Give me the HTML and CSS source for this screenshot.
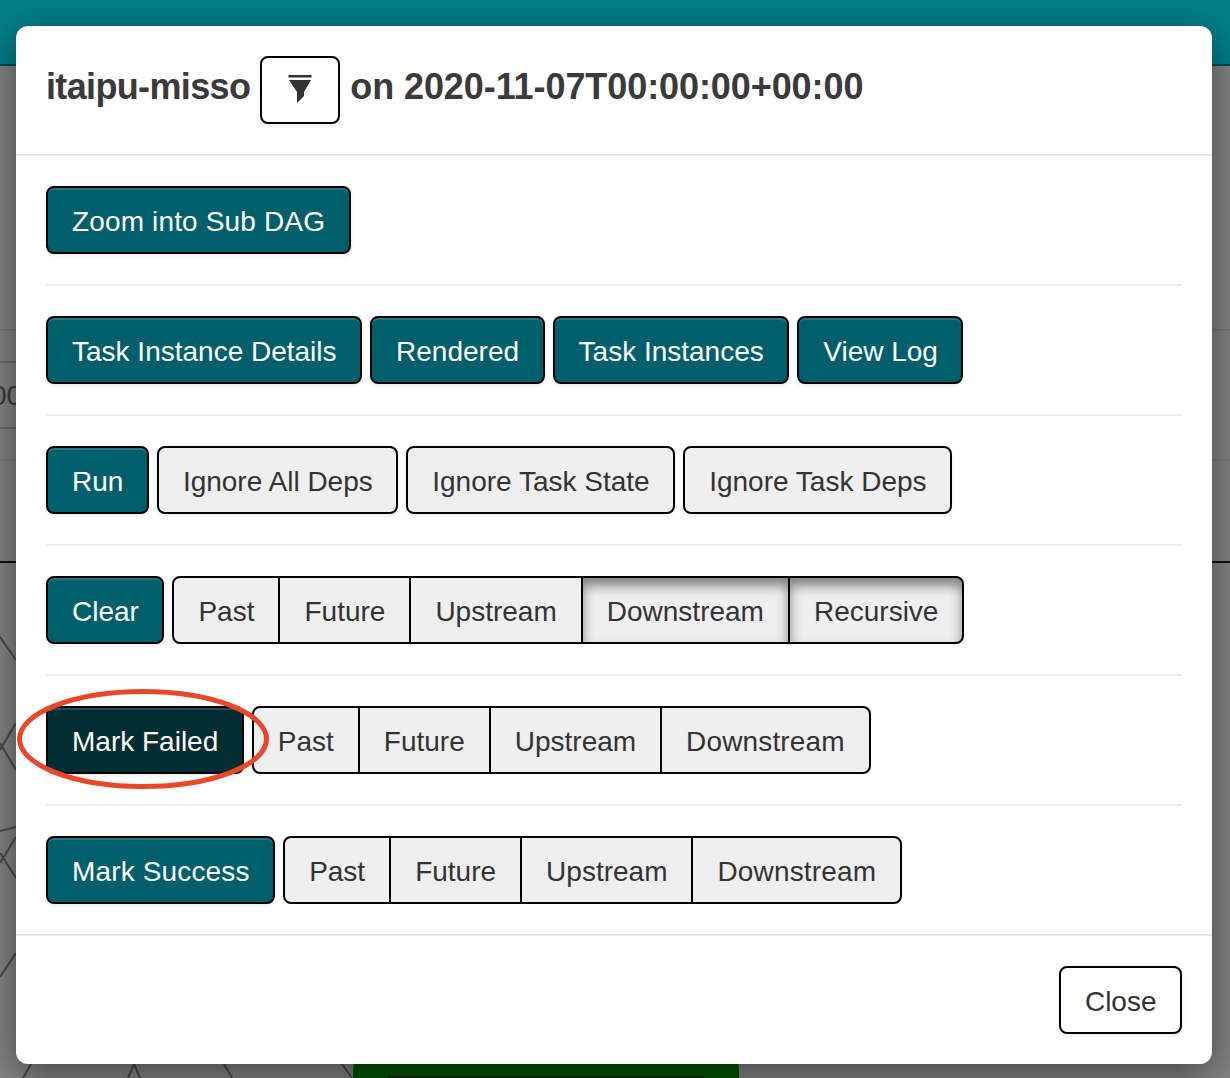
FILE: index.html
```html
<!DOCTYPE html>
<html lang="en">
<head>
    <meta charset="UTF-8">
    <meta name="viewport" content="width=device-width, initial-scale=1.0">
    <title>itaipu-misso</title>
    <link rel="stylesheet" href="styles.css">
</head>
<body>
    <!-- page behind the dialog -->
    <div class="page">
        <div class="navbar"></div>
        <div class="page-line line-a"></div>
        <div class="page-line page-line-short line-b"></div>
        <div class="page-line page-line-short line-c"></div>
        <div class="page-line line-d"></div>
        <div class="page-line line-e"></div>
        <div class="page-text">00</div>
        <svg class="graph-lines" width="1230" height="1078" viewBox="0 0 1230 1078">
            <path d="M0 637 L16 660 M16 723 L0 750 M0 743 L16 770 M0 831 L16 827 M16 837 L0 863 M0 853 L16 878 M16 953 L0 977 M31 1064 L23 1078 M134 1064 L128 1078 M134 1064 L140 1078 M224 1064 L232 1078 M342 1064 L352 1078" fill="none" stroke="#4a4a4a" stroke-width="2"/>
        </svg>
        <div class="graph-node"><div class="graph-node-inner"></div></div>
    </div>

    <div class="modal">
        <div class="modal-header">
            <span class="modal-title title-dag">itaipu-misso</span>
            <button class="btn btn-plain btn-filter">
                <svg width="24" height="30" viewBox="0 0 24 30">
                    <path d="M0.5 0H23.5V2.5H0.5Z" fill="#333"/>
                    <path d="M1 5H23L16 17V21L9 28V17Z" fill="#333"/>
                </svg>
            </button>
            <span class="modal-title title-date">on 2020-11-07T00:00:00+00:00</span>
        </div>
        <div class="modal-body">
            <div class="btn-row">
                <button class="btn btn-primary btn-loose">Zoom into Sub DAG</button>
            </div>
            <hr>
            <div class="btn-row">
                <button class="btn btn-primary">Task Instance Details</button>
                <button class="btn btn-primary">Rendered</button>
                <button class="btn btn-primary">Task Instances</button>
                <button class="btn btn-primary">View Log</button>
            </div>
            <hr>
            <div class="btn-row">
                <button class="btn btn-primary">Run</button>
                <button class="btn btn-light">Ignore All Deps</button>
                <button class="btn btn-light">Ignore Task State</button>
                <button class="btn btn-light">Ignore Task Deps</button>
            </div>
            <hr>
            <div class="btn-row">
                <button class="btn btn-primary">Clear</button>
                <div class="btn-group">
                    <button class="btn btn-light">Past</button>
                    <button class="btn btn-light">Future</button>
                    <button class="btn btn-light">Upstream</button>
                    <button class="btn btn-light active">Downstream</button>
                    <button class="btn btn-light active">Recursive</button>
                </div>
            </div>
            <hr>
            <div class="btn-row">
                <button class="btn btn-primary btn-pressed">Mark Failed</button>
                <div class="btn-group">
                    <button class="btn btn-light">Past</button>
                    <button class="btn btn-light">Future</button>
                    <button class="btn btn-light">Upstream</button>
                    <button class="btn btn-light btn-loose">Downstream</button>
                </div>
            </div>
            <hr>
            <div class="btn-row">
                <button class="btn btn-primary btn-loose">Mark Success</button>
                <div class="btn-group">
                    <button class="btn btn-light">Past</button>
                    <button class="btn btn-light">Future</button>
                    <button class="btn btn-light">Upstream</button>
                    <button class="btn btn-light btn-loose">Downstream</button>
                </div>
            </div>
        </div>
        <div class="modal-footer">
            <button class="btn btn-plain btn-close">Close</button>
        </div>
    </div>

    <!-- red annotation drawn over the screenshot -->
    <svg class="annotation" width="260" height="108" viewBox="0 0 260 108">
        <ellipse cx="129" cy="54" rx="123.5" ry="47.5" fill="none" stroke="#e9462a" stroke-width="5"/>
    </svg>
</body>
</html>
```

FILE: styles.css
```css
* {
    box-sizing: border-box;
}
html, body {
    height: 100%;
}
body {
    margin: 0;
    overflow: hidden;
    font-family: "Liberation Sans", Arial, sans-serif;
    color: #333;
    background-color: #858585;
}
.page {
    position: absolute;
    top: 0;
    left: 0;
    width: 1230px;
    height: 1078px;
    overflow: hidden;
}
.navbar {
    height: 66px;
    background-color: #00808b;
    border-bottom: 2px solid #004d54;
}
.page-line {
    position: absolute;
    left: 0;
    right: 0;
    height: 2px;
    background-color: #6e6e6e;
}
.page-line-short {
    right: auto;
    width: 16px;
}
.line-a { top: 329px; background-color: #7a7a7a; }
.line-b { top: 361px; }
.line-c { top: 427px; }
.line-d { top: 459px; background-color: #7a7a7a; }
.line-e { top: 561px; background-color: #111; }
.page-text {
    position: absolute;
    top: 380px;
    left: -9px;
    font-size: 28px;
    line-height: 32px;
    color: #3a3a3a;
}
.graph-lines {
    position: absolute;
    top: 0;
    left: 0;
}
.graph-node {
    position: absolute;
    top: 1040px;
    left: 353px;
    width: 386px;
    height: 60px;
    padding: 36px 35px 0;
    border-radius: 30px 30px 0 0;
    background-color: #005500;
}
.graph-node-inner {
    height: 100%;
    background-color: #222;
}
.modal {
    position: absolute;
    top: 26px;
    left: 16px;
    width: 1196px;
    background-color: #fff;
    border-radius: 12px;
    box-shadow: 0 10px 40px rgba(0, 0, 0, 0.5);
}
.modal-header {
    display: flex;
    align-items: center;
    gap: 10px;
    padding: 30px;
    border-bottom: 2px solid #e5e5e5;
}
.modal-title {
    padding-bottom: 6px;
    font-size: 36px;
    line-height: 40px;
    font-weight: bold;
    color: #3a3a3a;
}
.title-dag {
    letter-spacing: -0.65px;
}
.title-date {
    letter-spacing: -0.08px;
}
.modal-body {
    padding: 30px 30px 0;
}
.modal-body hr {
    height: 2px;
    margin: 30px 0;
    border: none;
    background-color: #eee;
}
.modal-body .btn-row:last-child {
    margin-bottom: 30px;
}
.btn-row {
    display: flex;
    gap: 8px;
}
.btn-group {
    display: flex;
}
.btn-group .btn {
    margin-left: -2px;
    border-radius: 0;
    box-shadow: none;
}
.btn-group .btn:first-child {
    margin-left: 0;
    border-radius: 8px 0 0 8px;
}
.btn-group .btn:last-child {
    border-radius: 0 8px 8px 0;
}
.btn {
    height: 68px;
    padding: 14px 24px 10px;
    font-family: inherit;
    font-size: 28px;
    line-height: 40px;
    white-space: nowrap;
    color: #333;
    background-color: #fff;
    border: 2px solid #000;
    border-radius: 8px;
    box-shadow: 0 2px 4px rgba(0, 0, 0, 0.08);
    cursor: pointer;
}
.btn-row > .btn {
    padding-right: 23.5px;
}
.btn-loose {
    letter-spacing: 0.15px;
}
.btn-primary {
    color: #fff;
    background-color: #005f6b;
    box-shadow: inset 0 2px 0 rgba(255, 255, 255, 0.15), 0 2px 4px rgba(0, 0, 0, 0.08);
}
.btn-pressed {
    background-color: #022d33;
}
.btn-light {
    background-color: #efefef;
}
.btn-group .active {
    box-shadow: inset 0 8px 12px rgba(0, 0, 0, 0.45);
}
.btn-filter {
    width: 80px;
    padding: 0;
    display: flex;
    align-items: center;
    justify-content: center;
}
.btn-close {
    padding-left: 23.5px;
    padding-right: 23.5px;
}
.modal-footer {
    display: flex;
    justify-content: flex-end;
    padding: 30px;
    border-top: 2px solid #e5e5e5;
}
.annotation {
    position: absolute;
    top: 685px;
    left: 14px;
}
```
